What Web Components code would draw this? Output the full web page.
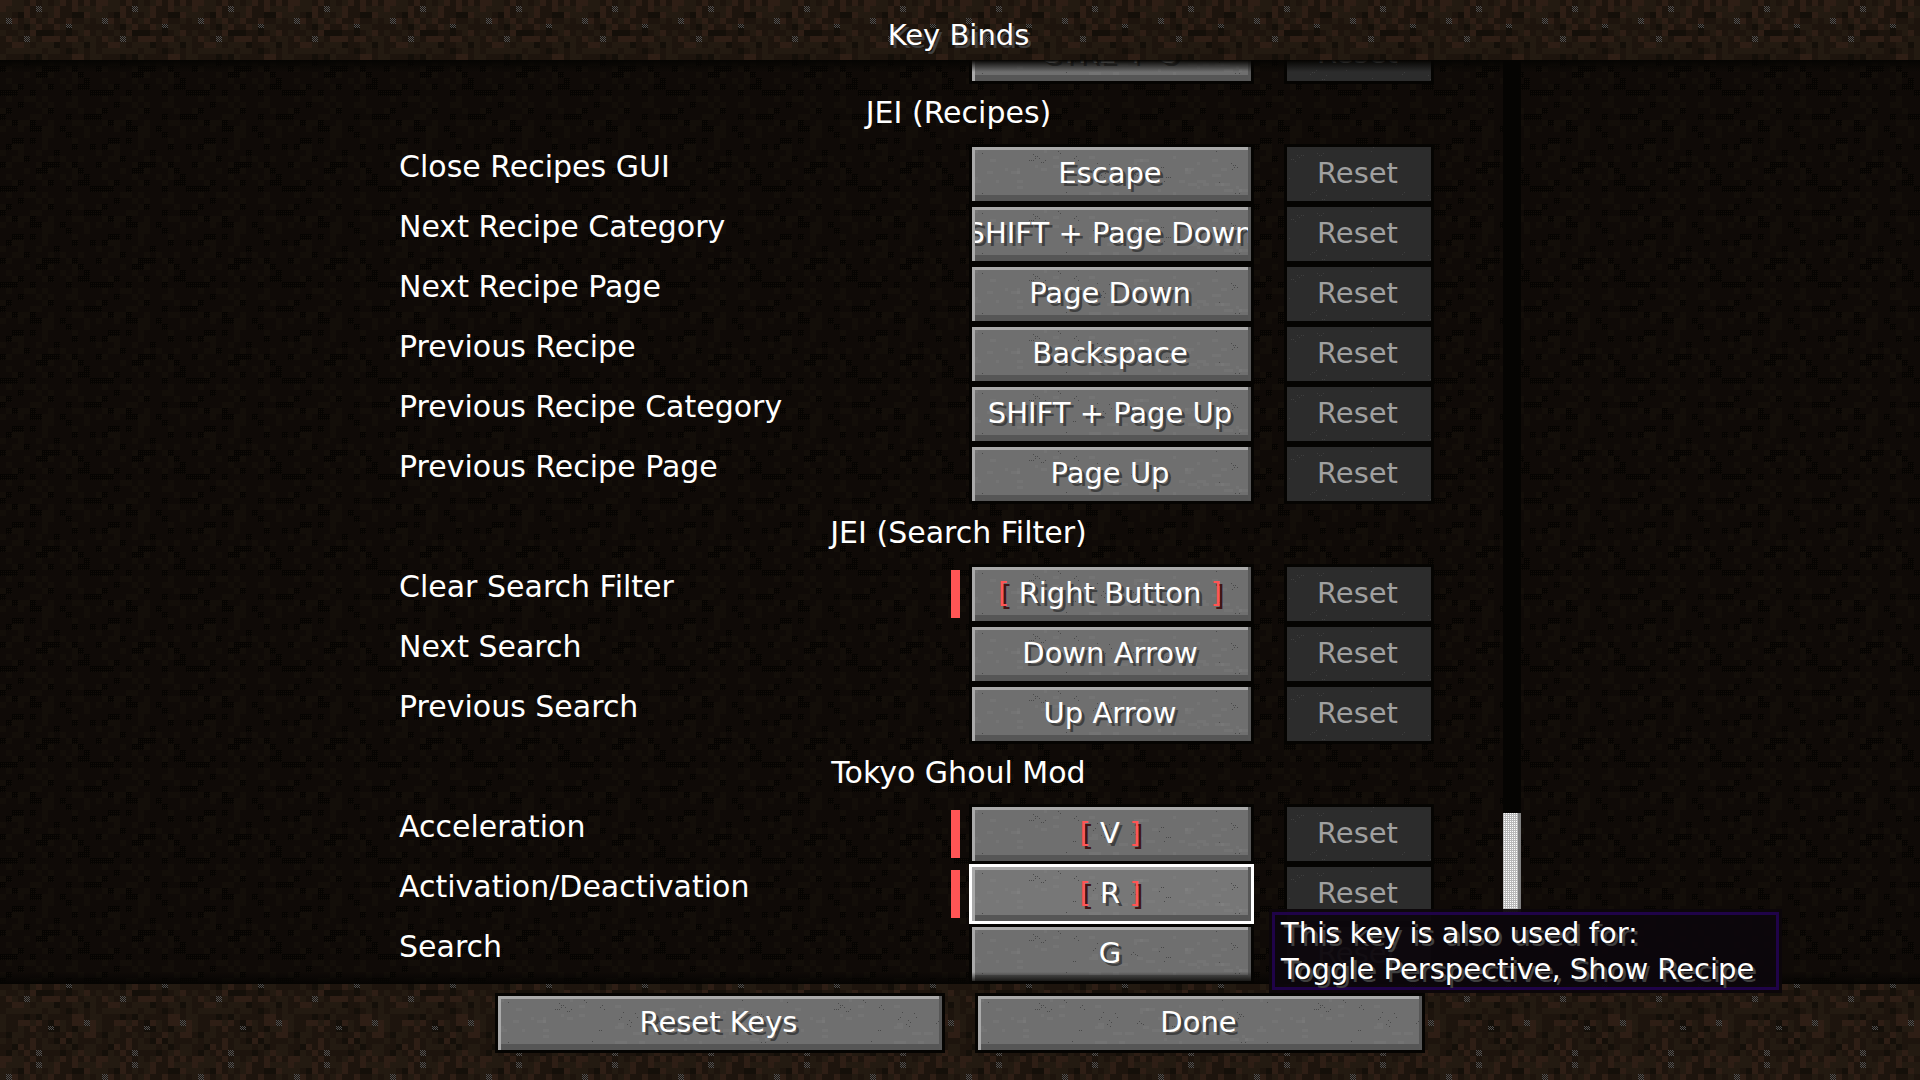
<!DOCTYPE html>
<html lang="en">
<head>
<meta charset="utf-8">
<title>Key Binds</title>
<style>
  html, body { margin: 0; height: 100%; background: #000; overflow: hidden; }
  body { font-family: "DejaVu Sans", sans-serif; font-size: 29px; line-height: 34px; color: #fff; }
</style>
</head>
<body>
<mc-screen>
  <mc-title slot="title">Key Binds</mc-title>
  <mc-row keys="CTRL + O" class="cut"></mc-row>
  <mc-heading>JEI (Recipes)</mc-heading>
  <mc-row keys="Escape">Close Recipes GUI</mc-row>
  <mc-row keys="SHIFT + Page Down">Next Recipe Category</mc-row>
  <mc-row keys="Page Down">Next Recipe Page</mc-row>
  <mc-row keys="Backspace">Previous Recipe</mc-row>
  <mc-row keys="SHIFT + Page Up">Previous Recipe Category</mc-row>
  <mc-row keys="Page Up">Previous Recipe Page</mc-row>
  <mc-heading>JEI (Search Filter)</mc-heading>
  <mc-row keys="Right Button" conflict>Clear Search Filter</mc-row>
  <mc-row keys="Down Arrow">Next Search</mc-row>
  <mc-row keys="Up Arrow">Previous Search</mc-row>
  <mc-heading>Tokyo Ghoul Mod</mc-heading>
  <mc-row keys="V" conflict>Acceleration</mc-row>
  <mc-row keys="R" conflict active>Activation/Deactivation</mc-row>
  <mc-row keys="G">Search</mc-row>
  <mc-button slot="actions">Reset Keys</mc-button>
  <mc-button slot="actions">Done</mc-button>
  <mc-tooltip slot="tooltip"><span>This key is also used for:</span><span>Toggle Perspective, Show Recipe</span></mc-tooltip>
</mc-screen>

<script>
const SOIL = [
  "RRbbdRdbdbRdRdRd",
  "RbbbRdgbbRddRbbb",
  "bbdDRdbdbRddDDRb",
  "bgRdbRdbRddRddbd",
  "ddbdDbRddRbhbbdd",
  "bddbdRDDDddDdbRd",
  "dRbdgbdRRRdRRdbb",
  "ddRRbdbbbDddbbDb",
  "dbbbbbbdbbdDdbdb",
  "bdddDdDbddddRRdb",
  "bddRRbRdDRbdRRgR",
  "bddbdRddhDbdDbbR",
  "dDbbddbdbddRbdRR",
  "bdbddRdbdDRDbddd",
  "ddDRdRdbbbdbDdbb",
  "dDbdRdgdddDdbRbb"
];
const SHADE = [
  "....b.DDb...bD..",
  ".b....b...b.b.D.",
  "..bD...bD..b.DD.",
  "DDD..D.....D...D",
  ".b..bb.b....b...",
  "...D..b.b..bb...",
  "bD.....bD....b..",
  "D....bb....D..DD",
  ".bDbbD..b...bb..",
  "b..b.DDbb.D...b.",
  ".......bb..D..b.",
  "..DD.D.b....b...",
  ".Dbb...b....D..D",
  "b..b..b..D......",
  "..bbD...b.b..b..",
  "Db....bDDD.bD..."
];
const COLORS = {
  soil: { D: "#140f09", d: "#1d140d", b: "#231a11", R: "#2e1e15", g: "#1d140d", h: "#140f09" },
  shade: { D: "#060402", ".": "#0f0a07", b: "#130e09" }
};
let uid = 0;

class McDirt extends HTMLElement {
  connectedCallback() {
    const dark = this.hasAttribute("dark");
    const map = dark ? SHADE : SOIL, col = dark ? COLORS.shade : COLORS.soil;
    let cells = "";
    map.forEach((row, y) => [...row].forEach((c, x) => {
      cells += `<rect x="${x * 6}" y="${y * 6}" width="6" height="6" fill="${col[c]}"/>`;
      if (c === "g" || c === "h") {
        const n = c === "g" ? 6 : 4;
        for (let j = 0; j < n; j++) for (let i = j % 2; i < 6; i += 2)
          cells += `<rect x="${x * 6 + i}" y="${y * 6 + j}" width="1" height="1" fill="#505050"/>`;
      }
      if (dark && c === "D") for (let j = 1; j < 6; j += 2) for (let i = 1; i < 6; i += 2)
        cells += `<rect x="${x * 6 + i}" y="${y * 6 + j}" width="1" height="1" fill="#120d08"/>`;
    }));
    const id = "soil" + uid++;
    this.attachShadow({ mode: "open" }).innerHTML = `
      <style>:host{position:absolute;inset:0;display:block;overflow:hidden}svg{display:block;width:100%;height:100%}</style>
      <svg aria-hidden="true" shape-rendering="crispEdges"><defs><pattern id="${id}" width="96" height="96" y="${this.getAttribute("shift") || 0}" patternUnits="userSpaceOnUse">${cells}</pattern></defs><rect width="100%" height="100%" fill="url(#${id})"/></svg>`;
  }
}
customElements.define("mc-dirt", McDirt);

/* Stone speckles: small clusters of single dots and soft lighter patches. */
function speckles(disabled) {
  let seed = 11, out = "";
  const rnd = n => (seed = (seed * 16807) % 2147483647) % n;
  if (!disabled) for (let i = 0; i < 55; i++)
    out += `<rect x="${rnd(92) * 3}" y="${rnd(16) * 3}" width="${3 + rnd(3) * 3}" height="3" fill="#fff" opacity="0.03"/>`;
  for (let i = 0; i < 26; i++) {
    const x = rnd(270), y = rnd(50), n = 1 + rnd(4);
    for (let k = 0; k < n; k++)
      out += `<rect x="${x + k * 2}" y="${y + rnd(3) * 2}" width="1" height="1" fill="${disabled ? "#3e3e3e" : "#4a4a4a"}"/>`;
  }
  return out;
}

class McButton extends HTMLElement {
  connectedCallback() {
    const off = this.hasAttribute("disabled"), id = "stone" + uid++;
    this.attachShadow({ mode: "open" }).innerHTML = `
      <style>
        :host { display: block; min-width: 0; }
        button { position: relative; display: flex; width: 100%; height: 60px; margin: 0; padding: 0;
          border: 3px solid #050402; border-radius: 0; background: #6f6f6f; color: #fff; font: inherit;
          box-sizing: border-box; overflow: hidden; text-shadow: 3px 3px #3f3f3f; }
        button:disabled { background: #2c2c2c; color: #a0a0a0; text-shadow: none; }
        :host([active]) button { border-color: #fff; background: #777; }
        svg { position: absolute; inset: 0; width: 100%; height: 100%; }
        .face { position: relative; flex: 1; min-width: 0; height: 54px; box-sizing: border-box; display: flex;
          padding: 3px 3px 6px;
          box-shadow: inset 3px 0 #a9a9a9, inset -3px 0 #575757, inset 0 3px #a9a9a9, inset 0 -6px #565656; }
        button:disabled .face { box-shadow: none; }
        .text { flex: 1; min-width: 0; display: flex; justify-content: center; align-items: center;
          padding-right: 3px; overflow: hidden; white-space: pre; }
      </style>
      <button type="button" ${off ? "disabled" : ""}>
        <svg aria-hidden="true" shape-rendering="crispEdges"><defs><pattern id="${id}" width="279" height="54" patternUnits="userSpaceOnUse">${speckles(off)}</pattern></defs><rect width="100%" height="100%" fill="url(#${id})"/></svg>
        <span class="face"><span class="text"><slot></slot></span></span>
      </button>`;
  }
}
customElements.define("mc-button", McButton);

class McRow extends HTMLElement {
  connectedCallback() {
    const keys = this.getAttribute("keys"), clash = this.hasAttribute("conflict");
    this.attachShadow({ mode: "open" }).innerHTML = `
      <style>
        :host { display: block; }
        :host(.cut) { margin-top: -36px; }
        .row { display: flex; height: 60px; }
        .name { flex: 1; padding-top: 6px; font-size: 30px; white-space: nowrap; }
        .mark { width: 9px; height: 48px; margin: 6px 9px 0 0; }
        .mark.on { background: #ff5555; }
        .key { width: 285px; margin-right: 30px; }
        .reset { width: 150px; }
        i { font-style: normal; color: #ff5555; text-shadow: 3px 3px #3f1515; }
      </style>
      <div class="row" role="group" aria-labelledby="name">
        <span class="name" id="name"><slot></slot></span>
        <span class="mark ${clash ? "on" : ""}"></span>
        <mc-button class="key" ${this.hasAttribute("active") ? "active" : ""}>${clash ? `<i>[ </i>${keys}<i> ]</i>` : keys}</mc-button>
        <mc-button class="reset" disabled>Reset</mc-button>
      </div>`;
  }
}
customElements.define("mc-row", McRow);

class McHeading extends HTMLElement {
  connectedCallback() {
    this.attachShadow({ mode: "open" }).innerHTML = `
      <style>
        :host { display: block; margin-right: -87px; }
        h2 { margin: 0; height: 60px; padding: 12px 3px 0 0; box-sizing: border-box; font: inherit; font-size: 30px; text-align: center; }
      </style><h2><slot></slot></h2>`;
  }
}
customElements.define("mc-heading", McHeading);

class McTitle extends HTMLElement {
  connectedCallback() {
    this.attachShadow({ mode: "open" }).innerHTML = `
      <style>
        :host { display: block; position: relative; }
        h1 { margin: 0; padding: 18px 3px 0 0; font: inherit; text-align: center; text-shadow: 3px 3px #3f3f3f; }
      </style><h1><slot></slot></h1>`;
  }
}
customElements.define("mc-title", McTitle);

class McTooltip extends HTMLElement {
  connectedCallback() {
    this.attachShadow({ mode: "open" }).innerHTML = `
      <style>
        :host { position: absolute; left: 1272px; top: 912px; z-index: 5; display: flex; flex-direction: column;
          min-width: 507px; box-sizing: border-box; padding: 0 6px; border: 3px solid #1f0348;
          background: rgba(12,6,12,.95); background-clip: padding-box; box-shadow: 0 0 0 3px rgba(12,6,9,.95);
          line-height: 36px; white-space: nowrap; text-shadow: 3px 3px #3f3f3f; }
      </style><slot></slot>`;
  }
}
customElements.define("mc-tooltip", McTooltip);

class McScreen extends HTMLElement {
  connectedCallback() {
    this.attachShadow({ mode: "open" }).innerHTML = `
      <style>
        :host { position: relative; display: grid; grid-template-rows: 60px minmax(0, 1fr) 96px; height: 100vh; overflow: hidden; }
        header, main, footer { position: relative; }
        main { overflow: hidden; display: flex; justify-content: center; }
        main::after { content: ""; position: absolute; inset: 0;
          background: linear-gradient(#050402, transparent) top / 100% 12px no-repeat,
            linear-gradient(transparent, #050402) bottom / 100% 12px no-repeat; }
        .list { position: relative; width: 1122px; box-sizing: border-box; padding: 0 87px 0 0; }
        .track { position: relative; width: 18px; margin-left: -18px; background: #050402; display: flex; flex-direction: column; justify-content: flex-end; }
        .thumb { height: 102px; margin-bottom: 69px; box-sizing: border-box; border-right: 3px solid #808080;
          background: conic-gradient(#fff 25%, #b8b8b8 0) 0 0 / 2px 2px; }
        footer { display: flex; justify-content: center; gap: 30px; padding-top: 9px; box-sizing: border-box; }
        footer ::slotted(mc-button) { width: 450px; }
      </style>
      <header><mc-dirt></mc-dirt><slot name="title"></slot></header>
      <main><mc-dirt dark shift="12"></mc-dirt><div class="list"><slot></slot></div><div class="track"><div class="thumb"></div></div></main>
      <footer><mc-dirt shift="-24"></mc-dirt><slot name="actions"></slot></footer>
      <slot name="tooltip"></slot>`;
  }
}
customElements.define("mc-screen", McScreen);
</script>
</body>
</html>
